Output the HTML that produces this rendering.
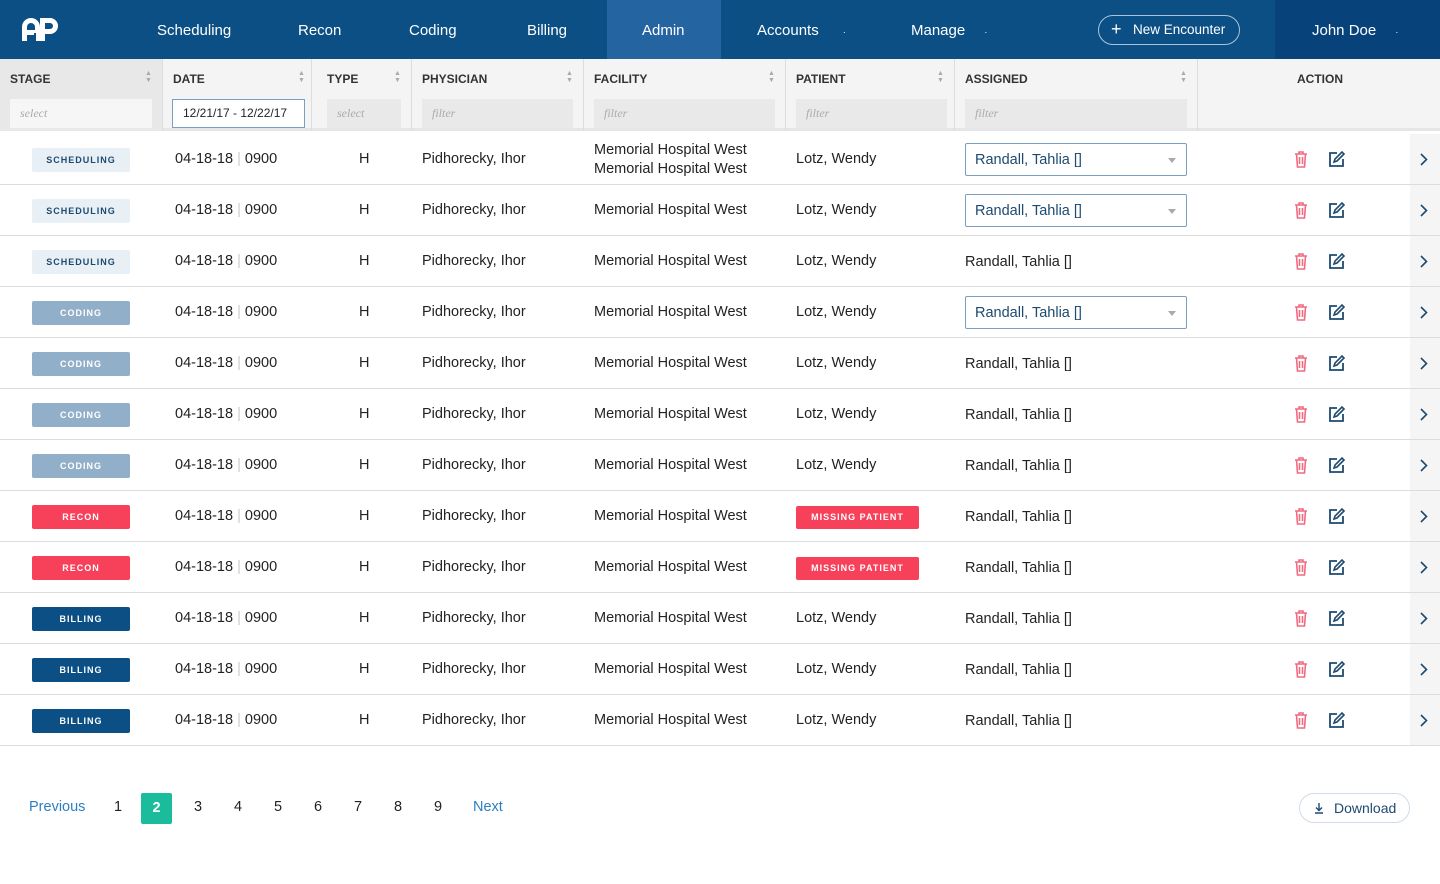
<!DOCTYPE html>
<html><head><meta charset="utf-8"><style>
*{box-sizing:border-box;margin:0;padding:0}
body{width:1440px;height:884px;background:#fff;font-family:"Liberation Sans",sans-serif;color:#222;position:relative;overflow:hidden}
.nav{position:absolute;left:0;top:0;width:1440px;height:59px;background:#0b4f85}
.nav .it{position:absolute;top:0;height:59px;line-height:62px;color:#fff;font-size:15px}
.admin{position:absolute;left:607px;top:0;width:114px;height:59px;background:#2464a0}
.user{position:absolute;left:1275px;top:0;width:165px;height:59px;background:#07437a}
.btn{position:absolute;left:1098px;top:15px;width:142px;height:30px;border:1px solid #a9c4dc;border-radius:15px;color:#fff;font-size:13.5px;line-height:28px;padding-left:34px}
.hdr{position:absolute;left:0;top:59px;width:1440px;height:72px;background:#f4f4f4;border-bottom:3px solid #e6e6e6}
.hc{position:absolute;top:59px;height:72px;border-right:1px solid #ddd}
.hl{position:absolute;top:72px;font-size:12px;font-weight:bold;color:#333}
.sort{position:absolute;top:70px;font-size:7px;color:#aaa;line-height:7px}
.f{position:absolute;top:99px;height:29px;background:#e9e9e9;font-style:italic;color:#aaa;font-size:12px;line-height:29px;padding-left:10px;font-family:"Liberation Serif",serif}
.row{position:absolute;left:0;width:1440px;height:51px;border-bottom:1px solid #dcdcdc}
.row>*{position:absolute}
.c{top:0;line-height:51px;font-size:14.5px;color:#222}
.b{left:32px;top:14px;width:98px;height:24px;border-radius:2px;font-size:9px;font-weight:bold;letter-spacing:1px;text-align:center;line-height:24px}
.sch{background:#e9f0f5;color:#1d4a70}.cod{background:#91afc8;color:#fff}.rec{background:#f7405a;color:#fff}.bil{background:#0b4f85;color:#fff}
.mp{left:796px;top:15px;width:123px;height:23px;background:#f7405a;color:#fff;font-size:9px;font-weight:bold;letter-spacing:1px;text-align:center;line-height:23px;border-radius:2px}
.sel{left:965px;top:9px;width:222px;height:33px;border:1px solid #7b9fc0;border-radius:2px;color:#1d4a70;font-size:14.5px;line-height:33px;padding-left:9px}
.sel:after{content:"";position:absolute;right:10px;top:14px;border:4px solid transparent;border-top:5px solid #aaa}
.chev{left:1410px;top:0;width:30px;height:50px;background:#f5f5f5}
.pg{position:absolute;top:799px;font-size:14.5px;color:#222}
</style></head><body>
<div class="nav">
<svg style="position:absolute;left:20px;top:16px" width="40" height="26" viewBox="0 0 40 26"><path d="M2 25V11a9 9 0 0 1 18 0v14h-5v-6H7v6zM7 14h8v-3a4 4 0 0 0-8 0z" fill="#fff"/><path d="M20 25V2h10a8 8 0 0 1 0 16h-5v7zM25 13h5a3 3 0 0 0 0-6h-5z" fill="#fff"/><rect x="14" y="17" width="2" height="8" fill="#0b4f85"/></svg>
<div class="admin"></div><div class="user"></div>
<div class="it" style="left:157px">Scheduling</div>
<div class="it" style="left:298px">Recon</div>
<div class="it" style="left:409px">Coding</div>
<div class="it" style="left:527px">Billing</div>
<div class="it" style="left:642px">Admin</div>
<div class="it" style="left:757px">Accounts <span style="margin-left:20px;font-size:9px">·</span></div>
<div class="it" style="left:911px">Manage <span style="margin-left:15px;font-size:9px">·</span></div>
<div class="btn"><span style="position:absolute;left:12px;top:-1px;font-size:18px">+</span>New Encounter</div>
<div class="it" style="left:1312px">John Doe <span style="margin-left:15px;font-size:9px">·</span></div>
</div>
<div class="hdr"></div>
<div class="hc" style="left:0;width:163px;background:#e8e8e8"></div>
<div class="hc" style="left:163px;width:149px"></div>
<div class="hc" style="left:312px;width:100px"></div>
<div class="hc" style="left:412px;width:172px"></div>
<div class="hc" style="left:584px;width:202px"></div>
<div class="hc" style="left:786px;width:169px"></div>
<div class="hc" style="left:955px;width:243px"></div>
<div class="hl" style="left:10px">STAGE</div><div class="sort" style="left:145px">▲<br>▼</div>
<div class="hl" style="left:173px">DATE</div><div class="sort" style="left:298px">▲<br>▼</div>
<div class="hl" style="left:327px">TYPE</div><div class="sort" style="left:394px">▲<br>▼</div>
<div class="hl" style="left:422px">PHYSICIAN</div><div class="sort" style="left:566px">▲<br>▼</div>
<div class="hl" style="left:594px">FACILITY</div><div class="sort" style="left:768px">▲<br>▼</div>
<div class="hl" style="left:796px">PATIENT</div><div class="sort" style="left:937px">▲<br>▼</div>
<div class="hl" style="left:965px">ASSIGNED</div><div class="sort" style="left:1180px">▲<br>▼</div>
<div class="hl" style="left:1297px">ACTION</div>
<div class="f" style="left:10px;width:142px;background:#f6f6f6">select</div>
<div class="f" style="left:172px;width:133px;background:#fff;border:1px solid #7b9fc0;font-style:normal;color:#222;font-family:'Liberation Sans',sans-serif;font-size:12px;line-height:27px">12/21/17 - 12/22/17</div>
<div class="f" style="left:327px;width:74px">select</div>
<div class="f" style="left:422px;width:151px">filter</div>
<div class="f" style="left:594px;width:181px">filter</div>
<div class="f" style="left:796px;width:151px">filter</div>
<div class="f" style="left:965px;width:222px">filter</div>
<div id="rows"></div>
<div class="pg" style="left:29px;color:#2b7fc1">Previous</div>
<div class="pg" style="left:114px">1</div>
<div class="pg" style="left:141px;top:793px;width:31px;height:31px;background:#1abc9c;color:#fff;text-align:center;line-height:31px;border-radius:2px;font-weight:bold">2</div>
<div class="pg" style="left:194px">3</div><div class="pg" style="left:234px">4</div><div class="pg" style="left:274px">5</div><div class="pg" style="left:314px">6</div><div class="pg" style="left:354px">7</div><div class="pg" style="left:394px">8</div><div class="pg" style="left:434px">9</div>
<div class="pg" style="left:473px;color:#2b7fc1">Next</div>
<div style="position:absolute;left:1299px;top:793px;width:111px;height:30px;border:1px solid #cfdbe6;border-radius:15px;color:#1d4a70;font-size:14px;line-height:28px;padding-left:34px"><svg style="position:absolute;left:14px;top:9px" width="10" height="11" viewBox="0 0 10 11"><path d="M5 0v7M2 4.5L5 7.5 8 4.5M1 10h8" stroke="#1d4a70" stroke-width="1.4" fill="none"/></svg>Download</div>
<script>
var st=[["sch","SCHEDULING"],["sch","SCHEDULING"],["sch","SCHEDULING"],["cod","CODING"],["cod","CODING"],["cod","CODING"],["cod","CODING"],["rec","RECON"],["rec","RECON"],["bil","BILLING"],["bil","BILLING"],["bil","BILLING"]];
var h="";
var trash='<svg width="14" height="17" viewBox="0 0 14 17"><path d="M1 3h12M5 3V1h4v2M2.5 3l1 13h7l1-13M5.5 6v7M8.5 6v7" stroke="#f06a80" stroke-width="1.6" fill="none"/></svg>';
var edit='<svg width="18" height="18" viewBox="0 0 18 18"><path d="M9 3H2v13h13V9" stroke="#1d4a70" stroke-width="1.8" fill="none"/><path d="M6 12l1-3 7-7 2 2-7 7z" stroke="#1d4a70" stroke-width="1.6" fill="none"/></svg>';
for(var i=0;i<12;i++){
var t=134+i*51;
var fac=i==0?'<div class="c" style="left:594px;line-height:19px;top:7px">Memorial Hospital West<br>Memorial Hospital West</div>':'<div class="c" style="left:594px">Memorial Hospital West</div>';
var pat=(i==7||i==8)?'<div class="mp">MISSING PATIENT</div>':'<div class="c" style="left:796px">Lotz, Wendy</div>';
var as=(i==0||i==1||i==3)?'<div class="sel">Randall, Tahlia []</div>':'<div class="c" style="left:965px;top:1px">Randall, Tahlia []</div>';
h+='<div class="row" style="top:'+t+'px"><div class="b '+st[i][0]+'">'+st[i][1]+'</div><div class="c" style="left:175px">04-18-18 <span style="color:#ccc">|</span> 0900</div><div class="c" style="left:359px">H</div><div class="c" style="left:422px">Pidhorecky, Ihor</div>'+fac+pat+as+'<div style="left:1294px;top:17px">'+trash+'</div><div style="left:1328px;top:16px">'+edit+'</div><div class="chev"><svg style="position:absolute;left:10px;top:19px" width="8" height="13" viewBox="0 0 8 13"><path d="M1 1l5.5 5.5L1 12" stroke="#1d4a70" stroke-width="1.6" fill="none"/></svg></div></div>';
}
document.getElementById("rows").innerHTML=h;
</script>
</body></html>
